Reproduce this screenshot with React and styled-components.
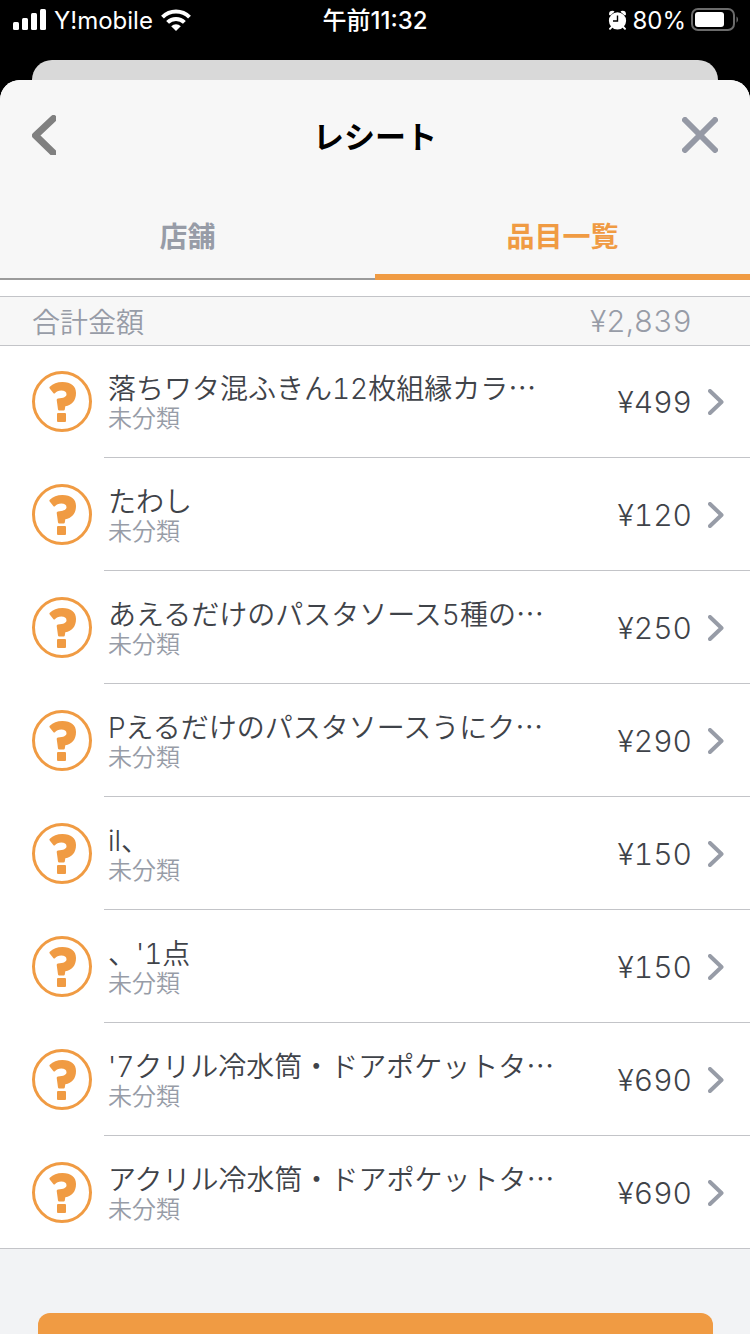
import React from "react";
import styled, { createGlobalStyle } from "styled-components";

const ORANGE = "#f09b43";
const GRAY = "#979ca7";
const INK = "#3f4349";
const LINE = "#c3c4c8";
const CJK = `"Noto Sans CJK JP", "Noto Sans", sans-serif`;
const LATIN = `Inter, ${CJK}`;

const GlobalStyle = createGlobalStyle`
  * { box-sizing: border-box; }
  body {
    margin: 0;
    background: #000;
    font-family: ${CJK};
    font-weight: 350;
  }
  button { font: inherit; border: 0; padding: 0; background: none; cursor: pointer; }
`;

const Screen = styled.div`
  display: flex;
  flex-direction: column;
  height: 100vh;
  overflow: hidden;
  background: #000;
`;

const StatusBar = styled.header`
  display: grid;
  grid-template-columns: 1fr auto 1fr;
  align-items: center;
  flex: none;
  height: 40px;
  padding: 0 12px;
  color: #fff;
  font-family: ${LATIN};
  font-size: 24px;
  font-weight: 400;
`;

const StatusGroup = styled.div`
  display: flex;
  align-items: center;
  justify-content: ${(p) => (p.$end ? "flex-end" : "flex-start")};
  gap: ${(p) => (p.$end ? 4 : 8)}px;
`;

const StatusText = styled.span`
  padding-top: 2px;
  line-height: 32px;
`;

const Clock = styled.time`
  padding-top: 2px;
  font-weight: 500;
  line-height: 32px;
`;

const BackSheet = styled.div`
  flex: none;
  height: 20px;
  margin: 20px 32px 0;
  border-radius: 20px 20px 0 0;
  background: #d9d9d9;
`;

const Sheet = styled.main`
  display: flex;
  flex-direction: column;
  flex: 1;
  min-height: 0;
  overflow: hidden;
  border-radius: 20px 20px 0 0;
  background: #fff;
`;

const TitleBar = styled.div`
  display: flex;
  align-items: center;
  justify-content: space-between;
  flex: none;
  height: 110px;
  padding: 0 32px;
  background: #f7f7f7;
`;

const Title = styled.h1`
  margin: 0;
  color: #000;
  font-size: 31px;
  font-weight: 700;
  line-height: 40px;
`;

const IconButton = styled.button`
  display: flex;
  align-items: center;
  justify-content: ${(p) => (p.$end ? "flex-end" : "flex-start")};
  width: 40px;
  height: 40px;
`;

const Tabs = styled.div`
  display: flex;
  flex: none;
  height: 90px;
  background: #f7f7f7;
`;

const Tab = styled.button`
  flex: 1;
  color: ${(p) => (p.$active ? ORANGE : GRAY)};
  font-size: 28px;
  font-weight: 700;
  line-height: 40px;
  box-shadow: inset 0 ${(p) => (p.$active ? `-6px ${ORANGE}` : "-2px #9b9b9b")};
`;

const Summary = styled.div`
  display: flex;
  align-items: center;
  justify-content: space-between;
  flex: none;
  height: 50px;
  margin-top: 16px;
  padding: 0 58px 0 32px;
  border: solid ${LINE};
  border-width: 1px 0;
  background: #f7f7f7;
  color: ${GRAY};
  font-size: 28px;
  line-height: 40px;
`;

const Amount = styled.span`
  font-family: ${LATIN};
  font-size: 30px;
  font-weight: 300;
  font-variant-numeric: tabular-nums;
`;

const List = styled.ul`
  flex: none;
  margin: -1px 0 0;
  padding: 0;
  border-bottom: 1px solid ${LINE};
  list-style: none;
`;

const RowBody = styled.span`
  display: flex;
  align-items: center;
  flex: 1;
  min-width: 0;
  height: 113px;
  margin-left: 12px;
  padding: 2px 26px 0 4px;
  border-bottom: 1px solid ${LINE};
`;

const Item = styled.li`
  &:last-child ${RowBody} {
    height: 112px;
    border-bottom: 0;
  }
`;

const RowLink = styled.a`
  display: flex;
  align-items: center;
  padding-left: 32px;
  color: ${INK};
  text-decoration: none;
`;

const Labels = styled.span`
  display: flex;
  flex-direction: column;
  flex: 1;
  min-width: 0;
  padding-top: 2px;
`;

const Name = styled.span`
  height: 28px;
  font-family: ${LATIN};
  font-size: 28px;
  font-variant-numeric: tabular-nums;
  line-height: 28px;
  white-space: nowrap;
`;

const Ellipsis = styled.span`
  font-family: ${CJK};
  line-height: 0;
`;

const Category = styled.span`
  color: ${GRAY};
  font-size: 24px;
  line-height: 28px;
`;

const Chevron = styled.svg`
  flex: none;
  margin-left: 16px;
`;

const Footer = styled.footer`
  flex: 1;
  min-height: 0;
  padding: 64px 37px 0 38px;
  background: #f2f3f5;
`;

const ActionButton = styled.button`
  width: 100%;
  height: 96px;
  border-radius: 12px;
  background: ${ORANGE};
`;

const items = [
  { name: "落ちワタ混ふきん12枚組縁カラ", cut: true, price: "¥499" },
  { name: "たわし", price: "¥120" },
  { name: "あえるだけのパスタソース5種の", cut: true, price: "¥250" },
  { name: "Pえるだけのパスタソースうにク", cut: true, price: "¥290" },
  { name: "il、", price: "¥150" },
  { name: "、'1点", price: "¥150" },
  { name: "'7クリル冷水筒・ドアポケットタ", cut: true, price: "¥690" },
  { name: "アクリル冷水筒・ドアポケットタ", cut: true, price: "¥690" },
];

const SignalIcon = () => (
  <svg width="34" height="22" viewBox="0 0 34 22" fill="#fff" aria-hidden="true">
    <rect x="1" y="13" width="6" height="8" rx="1.5" />
    <rect x="10" y="9" width="6" height="12" rx="1.5" />
    <rect x="19" y="4" width="6" height="17" rx="1.5" />
    <rect x="28" y="0" width="6" height="21" rx="1.5" />
  </svg>
);

const WifiIcon = () => (
  <svg width="30" height="22" viewBox="0 0 30 22" aria-hidden="true">
    <g fill="none" stroke="#fff" strokeWidth="4">
      <path d="M1.5 8.2a19 19 0 0 1 27 0" />
      <path d="M6.600 13.400a11.800 11.800 0 0 1 16.800 0" />
    </g>
    <path d="M15 22l-4.800-4.800a7 7 0 0 1 9.600 0z" fill="#fff" />
  </svg>
);

const AlarmIcon = () => (
  <svg width="20" height="20" viewBox="0 0 20 20" aria-hidden="true">
    <path d="M1 4.200Q1 .8 4.500 .8Q6 .8 6.500 1.800L2.200 5.600Q1 5 1 4.200Z" fill="#fff" />
    <path d="M18 4.200Q18 .8 14.500 .8Q13 .8 12.500 1.800L16.800 5.600Q18 5 18 4.200Z" fill="#fff" />
    <circle cx="9.500" cy="10.800" r="8.600" fill="#fff" />
    <path d="M3.800 16.800l-1.800 2M15.200 16.800l1.800 2" stroke="#fff" strokeWidth="2" strokeLinecap="round" />
    <path d="M9.500 5.500V11H5" fill="none" stroke="#000" strokeWidth="1.400" />
  </svg>
);

const BatteryIcon = () => (
  <svg width="48" height="24" viewBox="0 0 48 24" aria-hidden="true">
    <rect x="2" y="1" width="42" height="21" rx="6" fill="none" stroke="#6b6b6b" strokeWidth="2" />
    <rect x="5" y="4" width="29" height="15" rx="3" fill="#fff" />
    <path d="M46.500 8.500c2 1.200 2 5 0 6.200z" fill="#6b6b6b" />
  </svg>
);

const BackIcon = () => (
  <svg width="24" height="40" viewBox="0 0 24 40" aria-hidden="true">
    <path d="M21.500 3.500L3.500 20.500l18 17.500" fill="none" stroke="#808080" strokeWidth="7" strokeLinecap="round" strokeLinejoin="round" />
  </svg>
);

const CloseIcon = () => (
  <svg width="36" height="36" viewBox="0 0 36 36" aria-hidden="true">
    <path d="M3 3l30 30M33 3L3 33" stroke="#9599a5" strokeWidth="6" strokeLinecap="round" />
  </svg>
);

const QuestionIcon = () => (
  <svg width="60" height="61" viewBox="0 0 60 61" fill={ORANGE} aria-hidden="true">
    <ellipse cx="30" cy="30.500" rx="28.500" ry="29" fill="none" stroke={ORANGE} strokeWidth="3" />
    <path d="M17.800 15.800C21 12.500 25 11 30.500 11C39 11 44 15 44 22C44 29.500 40 34 33.300 35.300L32.800 38.500Q32.600 39.500 31.700 39.500H27.200Q26.200 39.500 26 38.500L24.700 29Q24.600 27.600 26 27.400C31.500 27 34.500 25.800 34.500 23.200C34.500 20.800 32.500 19.600 29.300 19.600C26.300 19.600 24.500 20.500 23.200 22Q22.200 23.200 21.300 22L17.700 17.500Q17 16.600 17.800 15.800Z" />
    <rect x="25" y="42" width="9" height="9" rx="1" />
  </svg>
);

export default function App() {
  return (
    <Screen>
      <GlobalStyle />
      <StatusBar>
        <StatusGroup>
          <SignalIcon />
          <StatusText>Y!mobile</StatusText>
          <WifiIcon />
        </StatusGroup>
        <Clock>午前11:32</Clock>
        <StatusGroup $end>
          <AlarmIcon />
          <StatusText>80%</StatusText>
          <BatteryIcon />
        </StatusGroup>
      </StatusBar>
      <BackSheet />
      <Sheet>
        <TitleBar>
          <IconButton aria-label="戻る"><BackIcon /></IconButton>
          <Title>レシート</Title>
          <IconButton $end aria-label="閉じる"><CloseIcon /></IconButton>
        </TitleBar>
        <Tabs role="tablist">
          <Tab role="tab" aria-selected="false">店舗</Tab>
          <Tab role="tab" aria-selected="true" $active>品目一覧</Tab>
        </Tabs>
        <Summary>
          <span>合計金額</span>
          <Amount>¥2,839</Amount>
        </Summary>
        <List>
          {items.map(({ name, cut, price }) => (
            <Item key={name}>
              <RowLink href="#">
                <QuestionIcon />
                <RowBody>
                  <Labels>
                    <Name>
                      {name}
                      {cut && <Ellipsis>…</Ellipsis>}
                    </Name>
                    <Category>未分類</Category>
                  </Labels>
                  <Amount>{price}</Amount>
                  <Chevron width="16" height="26" viewBox="0 0 16 26" aria-hidden="true">
                    <path d="M2 2l11.500 11L2 24" fill="none" stroke={GRAY} strokeWidth="4" strokeLinecap="round" strokeLinejoin="round" />
                  </Chevron>
                </RowBody>
              </RowLink>
            </Item>
          ))}
        </List>
        <Footer>
          <ActionButton aria-label="登録" />
        </Footer>
      </Sheet>
    </Screen>
  );
}
